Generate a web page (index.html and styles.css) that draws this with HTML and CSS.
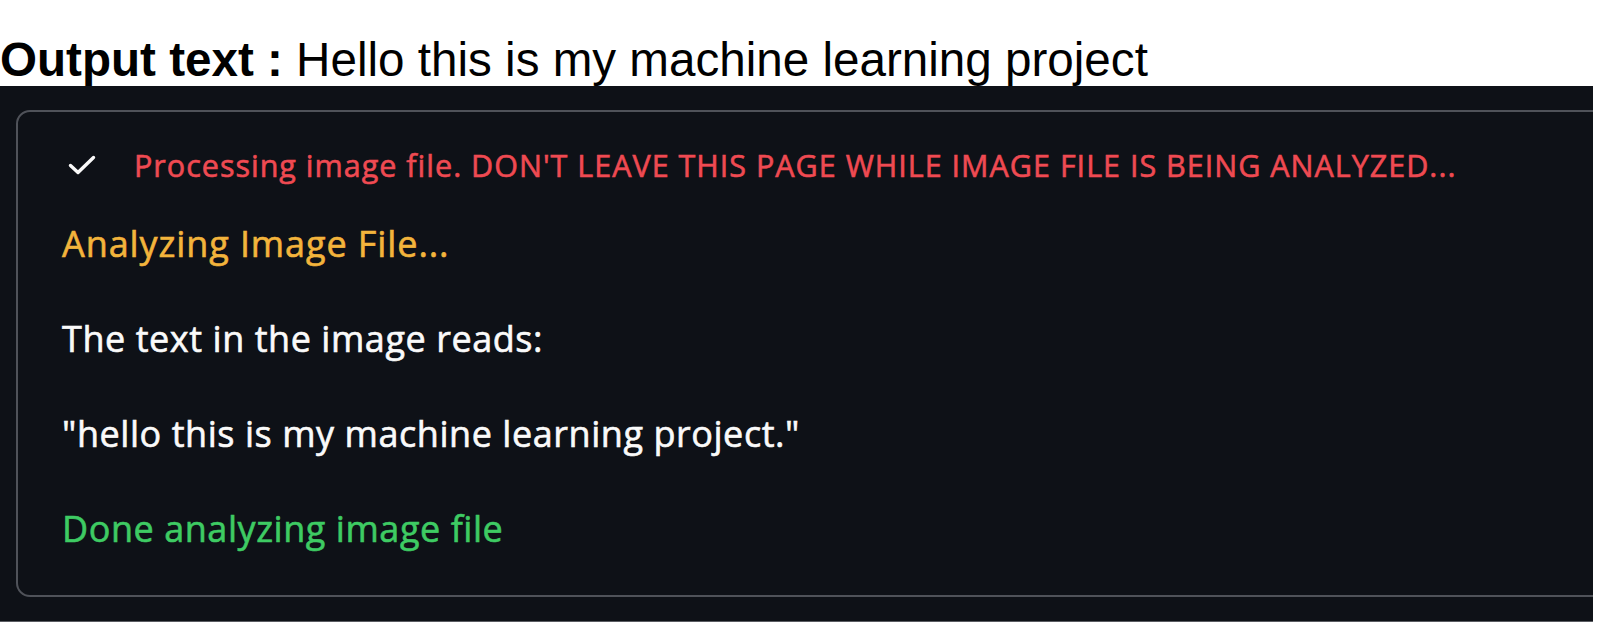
FILE: index.html
```html
<!DOCTYPE html>
<html lang="en">
<head>
<meta charset="utf-8">
<title>Output text</title>
<link rel="stylesheet" href="styles.css">
</head>
<body>
<h1 class="title"><strong>Output text :</strong> Hello this is my machine learning project</h1>
<div class="panel">
  <div class="status">
    <div class="status-head">
      <svg class="check" viewBox="0 0 28 22" width="28" height="22" aria-hidden="true"><path d="M2.5 11.5 L10 18.5 L25.5 3.5" fill="none" stroke="#fafafa" stroke-width="3.4" stroke-linecap="round" stroke-linejoin="round"/></svg>
      <span class="msg red">Processing image file. DON'T LEAVE THIS PAGE WHILE IMAGE FILE IS BEING ANALYZED...</span>
    </div>
    <div class="status-body">
      <p class="line orange">Analyzing Image File...</p>
      <p class="line">The text in the image reads:</p>
      <p class="line">"hello this is my machine learning project."</p>
      <p class="line green">Done analyzing image file</p>
    </div>
  </div>
</div>
</body>
</html>
```
FILE: styles.css
```css
html, body {
  margin: 0;
  padding: 0;
  background: #ffffff;
}
body {
  width: 1600px;
  height: 622px;
  overflow: hidden;
}
.title {
  margin: 0;
  padding: 34px 0 0 0;
  font-family: "Liberation Sans", Arial, sans-serif;
  font-size: 47.6px;
  line-height: 52px;
  font-weight: 400;
  color: #000;
  white-space: nowrap;
}
.title strong {
  font-weight: 700;
}
.panel {
  width: 1593px;
  height: 536px;
  box-sizing: border-box;
  background: #0e1117;
  padding: 24px 0 24px 16px;
  overflow: hidden;
  border-bottom: 1px solid #5a5c62;
}
.status {
  height: 487px;
  box-sizing: border-box;
  margin-right: -30px;
  border: 2px solid #4f5259;
  border-radius: 14px;
  font-family: "Open Sans", sans-serif;
  font-weight: 400;
  -webkit-text-stroke: 0.6px currentColor;
}
.status-head {
  display: flex;
  align-items: center;
  padding: 33px 0 0 50px;
  gap: 38px;
}
.check {
  flex: none;
}
.msg {
  font-size: 30.5px;
  line-height: 40px;
  letter-spacing: 1px;
  white-space: nowrap;
}
.status-body {
  padding: 11px 0 0 44px;
}
.line {
  margin: 0;
  font-size: 36px;
  line-height: 95px;
  letter-spacing: 0.55px;
  color: #fafafa;
}
.orange {
  letter-spacing: 0.9px;
}
.red { color: #ef4a52; }
.orange { color: #f3b43c; }
.green { color: #3ecb63; }
```
